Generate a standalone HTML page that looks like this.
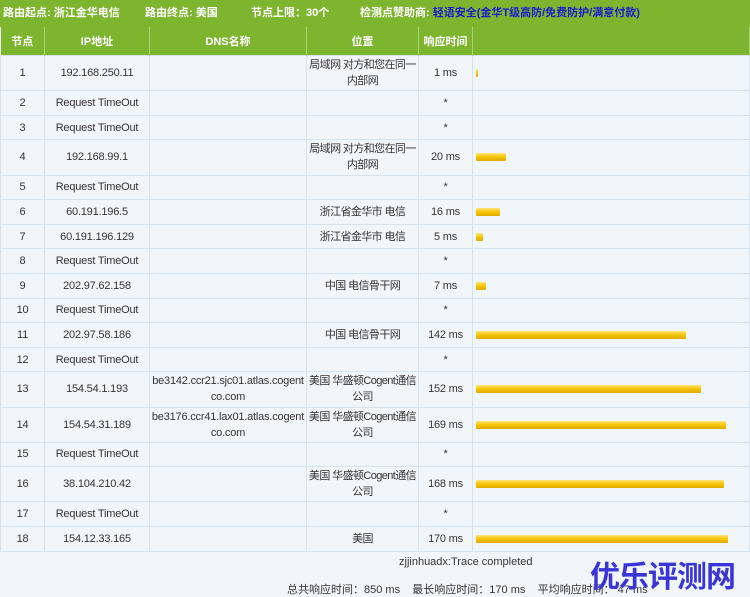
<!DOCTYPE html>
<html><head><meta charset="utf-8"><style>
body{margin:0;width:750px;height:597px;overflow:hidden;background:#f1f6fa;font-family:"Liberation Sans","Noto Sans CJK SC",sans-serif;font-size:11px;color:#333;position:relative}
.top{height:27px;background:#7db52f;color:#fff;font-weight:bold;font-size:11px;line-height:27px;white-space:nowrap}
.top span{position:absolute}
.top .b{color:#1a1ad0}
table{border-collapse:collapse;position:absolute;top:27px;left:0;width:750px;table-layout:fixed}
th{background:#7db52f;color:#fff;height:28px;font-size:11px;border-right:1px solid #a9d07a;padding:0}
td{border:1px solid #d6e2ec;text-align:center;padding:0 1px;font-size:11px;line-height:16px;background:#f1f6fa;word-break:break-all;letter-spacing:-0.2px}
td.p{letter-spacing:-0.6px}
tr.s td{height:23.6px}
tr.d td{height:34.2px}
.bar{height:8px;background:linear-gradient(#ffe57a,#f5c400 50%,#e0a800);margin-left:2px;border-radius:1px}
.foot{position:absolute;font-size:11px;white-space:nowrap}
.logo{position:absolute;left:590px;top:555px;font-size:30px;font-weight:bold;color:#3b35d8;letter-spacing:-1px;font-family:"Noto Sans CJK SC",sans-serif;line-height:38px;white-space:nowrap}
</style></head><body>
<div class="top"><span style="left:3px">路由起点: 浙江金华电信</span><span style="left:145px">路由终点: 美国</span><span style="left:251px">节点上限：30个</span><span style="left:360px">检测点赞助商: <span class="b" style="position:static">轻语安全(金华T级高防/免费防护/满意付款)</span></span></div>
<table>
<colgroup><col style="width:44px"><col style="width:105px"><col style="width:157px"><col style="width:112px"><col style="width:54px"><col></colgroup>
<tr><th>节点</th><th>IP地址</th><th>DNS名称</th><th>位置</th><th>响应时间</th><th></th></tr>
<tr class="d"><td>1</td><td>192.168.250.11</td><td></td><td class="p">局域网 对方和您在同一内部网</td><td>1 ms</td><td><div class="bar" style="width:2px"></div></td></tr>
<tr class="s"><td>2</td><td>Request TimeOut</td><td></td><td></td><td>*</td><td></td></tr>
<tr class="s"><td>3</td><td>Request TimeOut</td><td></td><td></td><td>*</td><td></td></tr>
<tr class="d"><td>4</td><td>192.168.99.1</td><td></td><td class="p">局域网 对方和您在同一内部网</td><td>20 ms</td><td><div class="bar" style="width:30px"></div></td></tr>
<tr class="s"><td>5</td><td>Request TimeOut</td><td></td><td></td><td>*</td><td></td></tr>
<tr class="s"><td>6</td><td>60.191.196.5</td><td></td><td class="p">浙江省金华市 电信</td><td>16 ms</td><td><div class="bar" style="width:24px"></div></td></tr>
<tr class="s"><td>7</td><td>60.191.196.129</td><td></td><td class="p">浙江省金华市 电信</td><td>5 ms</td><td><div class="bar" style="width:7px"></div></td></tr>
<tr class="s"><td>8</td><td>Request TimeOut</td><td></td><td></td><td>*</td><td></td></tr>
<tr class="s"><td>9</td><td>202.97.62.158</td><td></td><td class="p">中国 电信骨干网</td><td>7 ms</td><td><div class="bar" style="width:10px"></div></td></tr>
<tr class="s"><td>10</td><td>Request TimeOut</td><td></td><td></td><td>*</td><td></td></tr>
<tr class="s"><td>11</td><td>202.97.58.186</td><td></td><td class="p">中国 电信骨干网</td><td>142 ms</td><td><div class="bar" style="width:210px"></div></td></tr>
<tr class="s"><td>12</td><td>Request TimeOut</td><td></td><td></td><td>*</td><td></td></tr>
<tr class="d"><td>13</td><td>154.54.1.193</td><td>be3142.ccr21.sjc01.atlas.cogentco.com</td><td class="p">美国 华盛顿Cogent通信公司</td><td>152 ms</td><td><div class="bar" style="width:225px"></div></td></tr>
<tr class="d"><td>14</td><td>154.54.31.189</td><td>be3176.ccr41.lax01.atlas.cogentco.com</td><td class="p">美国 华盛顿Cogent通信公司</td><td>169 ms</td><td><div class="bar" style="width:250px"></div></td></tr>
<tr class="s"><td>15</td><td>Request TimeOut</td><td></td><td></td><td>*</td><td></td></tr>
<tr class="d"><td>16</td><td>38.104.210.42</td><td></td><td class="p">美国 华盛顿Cogent通信公司</td><td>168 ms</td><td><div class="bar" style="width:248px"></div></td></tr>
<tr class="s"><td>17</td><td>Request TimeOut</td><td></td><td></td><td>*</td><td></td></tr>
<tr class="s"><td>18</td><td>154.12.33.165</td><td></td><td class="p">美国</td><td>170 ms</td><td><div class="bar" style="width:252px"></div></td></tr>
</table>
<div class="foot" style="top:556px;left:399px">zjjinhuadx:Trace completed</div>
<div class="foot" style="top:581px;left:287px">总共响应时间：850 ms &nbsp;&nbsp; 最长响应时间：170 ms &nbsp;&nbsp; 平均响应时间： 47 ms</div>
<div class="logo">优乐评测网</div>
</body></html>
